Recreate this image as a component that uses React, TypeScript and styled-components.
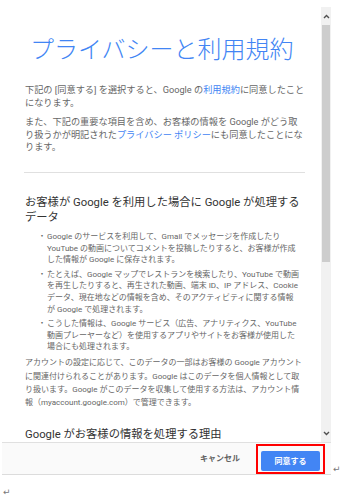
import React from 'react';
import styled, { createGlobalStyle } from 'styled-components';

const GlobalStyle = createGlobalStyle`
  body {
    margin: 0;
    background: #fff;
    font-family: Roboto, "Noto Sans CJK JP", sans-serif;
  }
`;

const Page = styled.div`
  padding: 7px 0 0 2px;
`;

const Row = styled.div`
  display: flex;
  align-items: flex-end;
`;

const Mark = styled.span`
  font-family: "DejaVu Sans", sans-serif;
  font-size: 9px;
  line-height: 10px;
  color: #777;
  margin-left: 2px;
  margin-bottom: 1px;
`;

const EndMark = styled(Mark)`
  display: block;
  margin: 12px 0 0 1px;
`;

const Dialog = styled.div`
  width: 329px;
  display: flex;
  flex-direction: column;
`;

const Body = styled.div`
  display: flex;
  height: 435px;
  overflow: hidden;
`;

const Content = styled.div`
  flex: 1;
  padding: 0 14px 0 23px;
  overflow: hidden;
  white-space: nowrap;
`;

const Title = styled.h1`
  margin: 28px 0 0 5px;
  font-size: 24px;
  line-height: 30px;
  font-weight: 300;
  color: #4285f4;
`;

const Para = styled.p<{ $gap: number }>`
  margin: ${(p) => p.$gap}px 0 0;
  font-size: 9.2px;
  line-height: 12.5px;
  color: #666;
`;

const Link = styled.a`
  color: #4285f4;
  text-decoration: none;
`;

const Divider = styled.hr`
  margin: 18.5px 2px 0 -1px;
  border: 0;
  border-top: 1px solid #e0e0e0;
`;

const Heading = styled.h2<{ $gap: number }>`
  margin: ${(p) => p.$gap}px 0 0;
  font-size: 11.3px;
  line-height: 15px;
  font-weight: 400;
  color: #333;
`;

const List = styled.ul`
  list-style: none;
  margin: 6.5px 0 0;
  padding: 0 0 0 13px;
  display: flex;
  flex-direction: column;
  gap: 3px;
`;

const Item = styled.li`
  display: flex;
  font-size: 8px;
  line-height: 11.6px;
  color: #666;
`;

const Dot = styled.span`
  width: 9px;
  flex: none;
`;

const Small = styled.p`
  margin: 3.5px 0 0;
  font-size: 8px;
  line-height: 13.3px;
  color: #666;
`;

const Scrollbar = styled.div`
  width: 10px;
  flex: none;
  display: flex;
  flex-direction: column;
  background: #f1f1f1;
`;

const Arrow = styled.div`
  height: 18px;
  flex: none;
  display: flex;
  align-items: center;
  justify-content: center;
`;

const Thumb = styled.div`
  height: 237px;
  flex: none;
  margin: 0 1px;
  background: #cdcdcd;
`;

const Track = styled.div`
  flex: 1;
`;

const Footer = styled.div`
  height: 30px;
  display: flex;
  justify-content: flex-end;
  align-items: flex-start;
  padding: 1px 6px 0 0;
  background: #fafafa;
  border-top: 1px solid #e0e0e0;
  border-bottom: 1px solid #dcdcdc;
`;

const Cancel = styled.span`
  margin: 10px 16px 0 0;
  font-size: 8px;
  line-height: 10px;
  font-weight: 700;
  color: #5f5f5f;
`;

const Highlight = styled.div`
  border: 2px solid #f00;
  padding: 3px;
  height: 20px;
`;

const Agree = styled.button`
  width: 59px;
  height: 20px;
  border: 0;
  border-radius: 2px;
  padding: 0;
  background: #4285f4;
  color: #fff;
  font-family: Roboto, "Noto Sans CJK JP", sans-serif;
  font-size: 8px;
  font-weight: 700;
`;

function Chevron({ up }: { up?: boolean }) {
  return (
    <svg width="7" height="5" viewBox="0 0 7 5">
      <polyline
        points={up ? '1,4 3.5,1.5 6,4' : '1,1 3.5,3.5 6,1'}
        fill="none"
        stroke="#505050"
        strokeWidth="1.4"
      />
    </svg>
  );
}

const bullets = [
  [
    'Google のサービスを利用して、Gmail でメッセージを作成したり',
    'YouTube の動画についてコメントを投稿したりすると、お客様が作成',
    'した情報が Google に保存されます。',
  ],
  [
    'たとえば、Google マップでレストランを検索したり、YouTube で動画',
    'を再生したりすると、再生された動画、端末 ID、IP アドレス、Cookie',
    'データ、現在地などの情報を含め、そのアクティビティに関する情報',
    'が Google で処理されます。',
  ],
  [
    'こうした情報は、Google サービス（広告、アナリティクス、YouTube',
    '動画プレーヤーなど）を使用するアプリやサイトをお客様が使用した',
    '場合にも処理されます。',
  ],
];

export default function App() {
  return (
    <Page>
      <GlobalStyle />
      <Row>
        <Dialog>
          <Body>
            <Content>
              <Title>プライバシーと利用規約</Title>
              <Para $gap={19}>
                下記の [同意する] を選択すると、Google の<Link>利用規約</Link>に同意したこと
                <br />
                になります。
              </Para>
              <Para $gap={7}>
                また、下記の重要な項目を含め、お客様の情報を Google がどう取
                <br />
                り扱うかが明記された<Link>プライバシー ポリシー</Link>にも同意したことにな
                <br />
                ります。
              </Para>
              <Divider />
              <Heading $gap={21.5}>
                お客様が Google を利用した場合に Google が処理する
                <br />
                データ
              </Heading>
              <List>
                {bullets.map((lines, i) => (
                  <Item key={i}>
                    <Dot>・</Dot>
                    <span>
                      {lines.map((l, j) => (
                        <React.Fragment key={j}>
                          {j > 0 && <br />}
                          {l}
                        </React.Fragment>
                      ))}
                    </span>
                  </Item>
                ))}
              </List>
              <Small>
                アカウントの設定に応じて、このデータの一部はお客様の Google アカウント
                <br />
                に関連付けられることがあります。Google はこのデータを個人情報として取
                <br />
                り扱います。Google がこのデータを収集して使用する方法は、アカウント情
                <br />
                報（myaccount.google.com）で管理できます。
              </Small>
              <Heading $gap={17.5}>Google がお客様の情報を処理する理由</Heading>
            </Content>
            <Scrollbar>
              <Arrow>
                <Chevron up />
              </Arrow>
              <Thumb />
              <Track />
              <Arrow>
                <Chevron />
              </Arrow>
            </Scrollbar>
          </Body>
          <Footer>
            <Cancel>キャンセル</Cancel>
            <Highlight>
              <Agree>同意する</Agree>
            </Highlight>
          </Footer>
        </Dialog>
        <Mark>↵</Mark>
      </Row>
      <EndMark>↵</EndMark>
    </Page>
  );
}
